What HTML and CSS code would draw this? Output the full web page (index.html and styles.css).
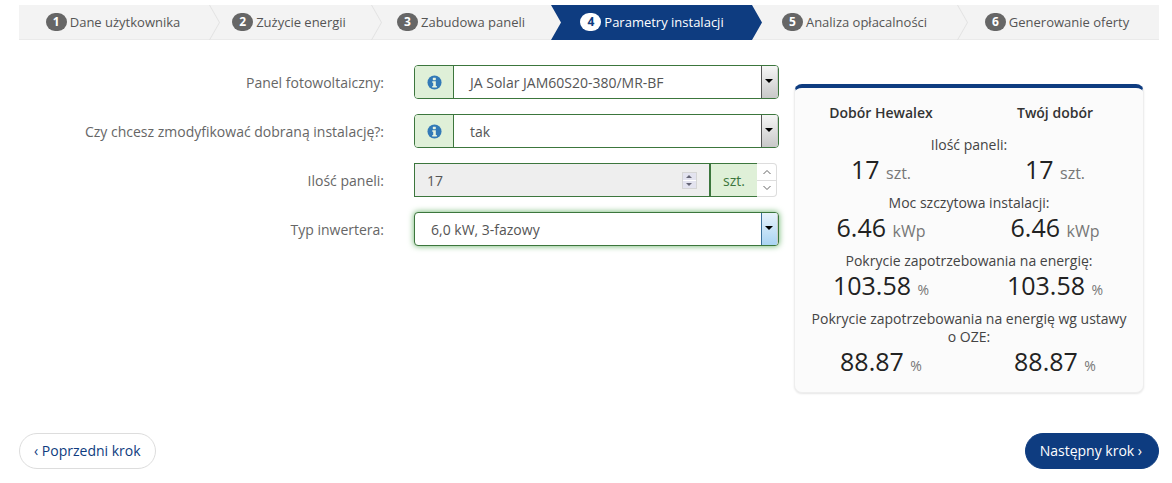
FILE: index.html
```html
<!DOCTYPE html>
<html lang="pl">
<head>
<meta charset="utf-8">
<title>Parametry instalacji</title>
<link rel="stylesheet" href="styles.css">
</head>
<body>
<nav class="steps">
  <div class="step s1"><span class="num">1</span><span>Dane użytkownika</span></div>
  <div class="step s2"><span class="num">2</span><span>Zużycie energii</span></div>
  <div class="step s3"><span class="num">3</span><span>Zabudowa paneli</span></div>
  <div class="step s4 active"><span class="num">4</span><span>Parametry instalacji</span></div>
  <div class="step s5"><span class="num">5</span><span>Analiza opłacalności</span></div>
  <div class="step s6 last"><span class="num">6</span><span>Generowanie oferty</span></div>
</nav>
<main class="content">
  <form class="form">
    <div class="row">
      <label class="label">Panel fotowoltaiczny:</label>
      <div class="control">
        <span class="addon info"><svg class="i" viewBox="0 0 16 16"><circle cx="8" cy="8" r="7.5" fill="#337ab7"/><rect x="6.2" y="2.8" width="3.2" height="2.8" rx=".5" fill="#e7f3e0"/><path d="M5.6 6.7h3.8v5h1.1v1.6H5.6v-1.6h1v-3.4h-1z" fill="#e7f3e0"/></svg></span>
        <span class="value">JA Solar JAM60S20-380/MR-BF</span>
        <span class="arrow"><b></b></span>
      </div>
    </div>
    <div class="row">
      <label class="label">Czy chcesz zmodyfikować dobraną instalację?:</label>
      <div class="control">
        <span class="addon info"><svg class="i" viewBox="0 0 16 16"><circle cx="8" cy="8" r="7.5" fill="#337ab7"/><rect x="6.2" y="2.8" width="3.2" height="2.8" rx=".5" fill="#e7f3e0"/><path d="M5.6 6.7h3.8v5h1.1v1.6H5.6v-1.6h1v-3.4h-1z" fill="#e7f3e0"/></svg></span>
        <span class="value">tak</span>
        <span class="arrow"><b></b></span>
      </div>
    </div>
    <div class="row">
      <label class="label">Ilość paneli:</label>
      <div class="number">
        <div class="numbox">
          <span class="value">17</span>
          <span class="spin"><i class="up"></i><i class="down"></i></span>
        </div>
        <span class="addon unit">szt.</span>
        <span class="updown">
          <span class="ud"><svg viewBox="0 0 10 6"><path d="M1.5 5 5 1.5 8.5 5" fill="none" stroke="#666" stroke-width="1"/></svg></span>
          <span class="ud"><svg viewBox="0 0 10 6"><path d="M1.5 1 5 4.5 8.5 1" fill="none" stroke="#666" stroke-width="1"/></svg></span>
        </span>
      </div>
    </div>
    <div class="row">
      <label class="label">Typ inwertera:</label>
      <div class="control focus">
        <span class="value">6,0 kW, 3-fazowy</span>
        <span class="arrow"><b></b></span>
      </div>
    </div>
  </form>
  <aside class="panel">
    <div class="cols heads"><strong>Dobór Hewalex</strong><strong>Twój dobór</strong></div>
    <p class="title">Ilość paneli:</p>
    <div class="cols"><span class="big">17 <small>szt.</small></span><span class="big">17 <small>szt.</small></span></div>
    <p class="title">Moc szczytowa instalacji:</p>
    <div class="cols"><span class="big">6.46 <small>kWp</small></span><span class="big">6.46 <small>kWp</small></span></div>
    <p class="title">Pokrycie zapotrzebowania na energię:</p>
    <div class="cols"><span class="big">103.58 <small class="pc">%</small></span><span class="big">103.58 <small class="pc">%</small></span></div>
    <p class="title">Pokrycie zapotrzebowania na energię wg ustawy o OZE:</p>
    <div class="cols"><span class="big">88.87 <small class="pc">%</small></span><span class="big">88.87 <small class="pc">%</small></span></div>
  </aside>
</main>
<footer class="buttons">
  <a class="btn prev">‹ Poprzedni krok</a>
  <a class="btn next">Następny krok ›</a>
</footer>
</body>
</html>
```
FILE: styles.css
```css
* { box-sizing: border-box; }
html, body { margin: 0; height: 100%; }
body {
  padding: 5px 13px 0 19px;
  background: #fff;
  color: #555;
  font: 14px/20px "Open Sans", sans-serif;
  overflow: hidden;
}
.steps {
  display: flex;
  height: 35px;
  background: #f3f3f3;
  border-bottom: 1px solid #eaeaea;
}
.step {
  position: relative;
  display: flex;
  align-items: center;
  justify-content: center;
  gap: 3px;
  height: 34px;
  padding-bottom: 1px;
  color: #555;
  font-size: 13px;
}
.step::after {
  content: "";
  position: absolute;
  right: -11px;
  top: 0;
  width: 11px;
  height: 35px;
  background: #e2e2e2;
  clip-path: polygon(0 0, 1px 0, 100% 50%, 1px 100%, 0 100%, 10px 50%);
}
.s1 { width: 190px; padding-right: 2px; }
.s2 { width: 162px; padding-right: 2px; }
.s3 { width: 180px; }
.s4 { width: 201px; }
.s5 { width: 205px; }
.s6 { width: 202px; padding-right: 2px; }
.num {
  display: inline-flex;
  align-items: center;
  justify-content: center;
  width: 21px;
  height: 18px;
  border-radius: 10px;
  background: #666;
  color: #fff;
  font-size: 12px;
  font-weight: 700;
}
.active {
  z-index: 1;
  width: 211px;
  margin-right: -10px;
  height: 35px;
  padding-right: 9px;
  background: #0e3c80;
  color: #fff;
  clip-path: polygon(0 0, 201px 0, 100% 50%, 201px 100%, 0 100%, 10px 50%);
}
.s3::after, .active::after, .last::after { display: none; }
.active .num { background: #fff; color: #0e3c80; }
.content {
  display: flex;
  align-items: flex-start;
  gap: 15px;
  padding-top: 25px;
}
.form {
  display: flex;
  flex-direction: column;
  gap: 15px;
  width: 760px;
}
.row { display: flex; align-items: center; gap: 30px; height: 34px; }
.label { width: 365px; padding-top: 2px; text-align: right; color: #666; }
.control {
  display: flex;
  width: 365px;
  height: 34px;
  border: 1px solid #3c763d;
  border-radius: 4px;
  overflow: hidden;
  background: #fff;
}
.focus { box-shadow: 0 0 6px #67b168; }
.addon {
  display: flex;
  align-items: center;
  justify-content: center;
  background: #dff0d8;
  color: #3c763d;
}
.info { width: 39px; border-right: 1px solid #3c763d; }
.i { width: 15px; height: 15px; }
.value { flex: 1; padding: 1px 0 0 16px; line-height: 32px; color: #555; }
.arrow {
  position: relative;
  width: 17px;
  border-left: 1px solid #555;
  border-right: 1px solid #ccc;
  background: linear-gradient(#f6f6f6, #c8c8c8);
}
.focus .arrow { background: linear-gradient(#e8f3fb, #a9d4f3); border-left-color: #3a7099; }
.arrow b {
  position: absolute;
  left: 3px;
  top: 13px;
  border: 4px solid transparent;
  border-top: 4px solid #000;
  border-bottom: 0;
}
.number { display: flex; width: 363px; height: 34px; }
.numbox {
  display: flex;
  align-items: center;
  width: 295px;
  border: 1px solid #3c763d;
  border-right: 0;
  background: #eee;
}
.numbox .value { padding-left: 12px; }
.spin {
  display: flex;
  flex-direction: column;
  gap: 1px;
  width: 15px;
  height: 17px;
  margin-right: 12px;
  background: #fff;
  border: 1px solid #d5d5d5;
}
.spin i { position: relative; flex: 1; background: #e3e3ef; }
.spin .up::after, .spin .down::after {
  content: "";
  position: absolute;
  left: 3px;
  top: 2px;
  border: 3.5px solid transparent;
}
.spin .up::after { border-bottom: 3px solid #667; border-top: 0; }
.spin .down::after { border-top: 3px solid #667; border-bottom: 0; }
.unit {
  width: 48px;
  padding-top: 1px;
  border: 1px solid #3c763d;
  border-width: 1px 0 1px 2px;
}
.updown {
  display: flex;
  flex-direction: column;
  width: 20px;
  border: 1px solid #ddd;
  border-left: 0;
  border-radius: 0 4px 4px 0;
}
.ud { flex: 1; display: flex; align-items: center; justify-content: center; }
.ud + .ud { border-top: 1px solid #ddd; }
.ud svg { width: 10px; height: 6px; }
.panel {
  width: 350px;
  height: 309px;
  margin-top: 19px;
  padding-top: 15px;
  background: #fbfbfb;
  border: 1px solid #eee;
  border-top: 4px solid #0e3c80;
  border-radius: 8px;
  box-shadow: 0 1px 2px rgba(0,0,0,.1);
  text-align: center;
  color: #444;
}
.cols { display: grid; grid-template-columns: 174px 174px; margin-left: -1px; }
.heads { height: 20px; margin-bottom: 13px; }
.heads strong { color: #333; font-weight: 600; }
.title { margin: 0; padding: 0 15px; color: #444; line-height: 18px; }
.big { font-size: 25px; line-height: 30px; color: #222; }
.big small { font-size: 16px; line-height: 1; color: #777; }
.big small.pc { font-size: 14px; }
.cols + .title { margin-top: 10px; }
.buttons {
  display: flex;
  justify-content: space-between;
  margin-top: 40px;
}
.btn {
  display: flex;
  align-items: center;
  height: 36px;
  padding: 0 14px;
  border-radius: 18px;
  color: #0e3c80;
  border: 1px solid #ddd;
}
.next { padding: 0 16px 0 14px; background: #0e3c80; color: #fff; border-color: #0e3c80; }
```
